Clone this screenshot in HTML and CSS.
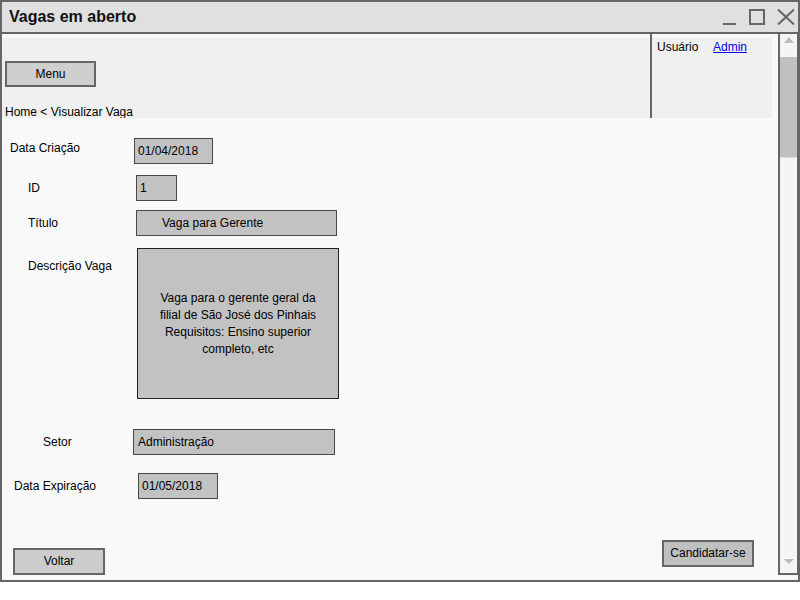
FILE: index.html
```html
<!DOCTYPE html>
<html lang="pt-BR">
<head>
<meta charset="utf-8">
<title>Vagas em aberto</title>
<link rel="stylesheet" href="styles.css">
</head>
<body>
<div class="window">
  <div class="titlebar">
    <span class="title">Vagas em aberto</span>
    <svg class="controls" width="76" height="30" viewBox="0 0 76 30">
      <rect x="1" y="21" width="13" height="2" fill="#666"/>
      <rect x="28" y="8" width="14" height="14" fill="none" stroke="#666" stroke-width="2"/>
      <path d="M56 7.5 L72 22.5 M72 7.5 L56 22.5" stroke="#666" stroke-width="2" fill="none"/>
    </svg>
  </div>
  <div class="body">
    <div class="main">
      <div class="header">
        <div class="nav">
          <div class="nav-inner">
            <div class="btn menu">Menu</div>
            <div class="crumb">Home &lt; Visualizar Vaga</div>
          </div>
        </div>
        <div class="user">
          <div class="user-inner">
            <span class="user-label">Usuário</span><a class="user-link" href="#">Admin</a>
          </div>
        </div>
      </div>
      <div class="form">
        <div class="row r1">
          <span class="label l1">Data Criação</span>
          <div class="field f1">01/04/2018</div>
        </div>
        <div class="row r2">
          <span class="label l2">ID</span>
          <div class="field f2">1</div>
        </div>
        <div class="row r3">
          <span class="label l3">Título</span>
          <div class="field f3">Vaga para Gerente</div>
        </div>
        <div class="row r4">
          <span class="label l4">Descrição Vaga</span>
          <div class="field area">Vaga para o gerente geral da filial de São José dos Pinhais Requisitos: Ensino superior completo, etc</div>
        </div>
        <div class="row r5">
          <span class="label l5">Setor</span>
          <div class="field f5">Administração</div>
        </div>
        <div class="row r6">
          <span class="label l6">Data Expiração</span>
          <div class="field f6">01/05/2018</div>
        </div>
        <div class="actions">
          <div class="btn back">Voltar</div>
          <div class="btn apply">Candidatar-se</div>
        </div>
      </div>
    </div>
    <div class="scrollbar">
      <div class="sb-up"><span class="tri-up"></span></div>
      <div class="sb-thumb"></div>
      <div class="sb-track"></div>
      <div class="sb-down"><span class="tri-down"></span></div>
    </div>
  </div>
</div>
</body>
</html>
```

FILE: styles.css
```css
html, body {
  margin: 0;
  padding: 0;
  background: #ffffff;
}

body {
  font-family: "Liberation Sans", Arial, sans-serif;
  font-size: 12px;
  color: #000;
}

.window {
  width: 800px;
  height: 582px;
  box-sizing: border-box;
  border: 2px solid #666;
  background: #f9f9f9;
  display: flex;
  flex-direction: column;
}

.titlebar {
  height: 30px;
  flex: 0 0 30px;
  border-bottom: 2px solid #666;
  background: #e0e0e0;
  display: flex;
  align-items: center;
  justify-content: space-between;
}

.title {
  padding-left: 7px;
  font-size: 16px;
  font-weight: bold;
  line-height: 30px;
  color: #111;
}

.controls {
  display: block;
}

.body {
  flex: 1;
  display: flex;
  min-height: 0;
}

.main {
  width: 776px;
  display: flex;
  flex-direction: column;
}

.header {
  display: flex;
  height: 84px;
  width: 770px;
}

.nav {
  width: 650px;
  box-sizing: border-box;
  border-right: 2px solid #666;
  padding-top: 4px;
}

.nav-inner {
  height: 80px;
  box-sizing: border-box;
  background: #f0f0f0;
  overflow: hidden;
  padding: 23px 0 0 3px;
}

.btn {
  box-sizing: border-box;
  border: 2px solid #666;
  background: #c8c8c8;
  text-align: center;
  font-size: 12px;
}

.menu {
  width: 91px;
  height: 26px;
  line-height: 22px;
  background: #cfcfcf;
}

.crumb {
  margin-top: 18px;
  line-height: 14px;
  white-space: nowrap;
}

.user {
  width: 120px;
  padding-top: 4px;
}

.user-inner {
  height: 80px;
  box-sizing: border-box;
  background: #f0f0f0;
  padding: 2px 0 0 5px;
  line-height: 14px;
}

.user-label {
  display: inline-block;
  width: 56px;
}

.user-link {
  color: #0000ee;
  text-decoration: underline;
}

.form {
  display: flex;
  flex-direction: column;
}

.row {
  display: flex;
  align-items: center;
}

.label {
  line-height: 14px;
  white-space: nowrap;
}

.field {
  box-sizing: border-box;
  height: 26px;
  border: 1px solid #484848;
  background: #c2c2c2;
  line-height: 24px;
  padding-left: 3px;
  white-space: nowrap;
}

.r1 { margin-top: 20px; padding-left: 8px; }
.l1 { width: 124px; margin-bottom: 6px; }
.f1 { width: 79px; }

.r2 { margin-top: 11px; padding-left: 26px; }
.l2 { width: 108px; }
.f2 { width: 41px; padding-left: 3px; }

.r3 { margin-top: 9px; padding-left: 26px; }
.l3 { width: 108px; }
.f3 { width: 201px; padding-left: 25px; }

.r4 { margin-top: 12px; padding-left: 26px; align-items: flex-start; }
.l4 { width: 109px; margin-top: 11px; }
.area {
  width: 202px;
  height: 151px;
  border-color: #222;
  white-space: normal;
  display: flex;
  align-items: center;
  justify-content: center;
  text-align: center;
  line-height: 17px;
  padding: 0 14px;
}

.r5 { margin-top: 30px; padding-left: 41px; }
.l5 { width: 90px; }
.f5 { width: 202px; padding-left: 4px; }

.r6 { margin-top: 18px; padding-left: 12px; }
.l6 { width: 124px; }
.f6 { width: 80px; padding-left: 3px; }

.actions {
  display: flex;
  justify-content: space-between;
  align-items: flex-start;
  margin-top: 41px;
  padding: 0 24px 0 11px;
}

.back {
  width: 92px;
  height: 27px;
  line-height: 23px;
  margin-top: 8px;
  background: #cccccc;
}

.apply {
  width: 92px;
  height: 27px;
  line-height: 23px;
  background: #c0c0c0;
}

.scrollbar {
  width: 20px;
  height: 541px;
  box-sizing: border-box;
  border-left: 2px solid #666;
  border-right: 1px solid #666;
  border-bottom: 2px solid #666;
  background: #f5f5f5;
  display: flex;
  flex-direction: column;
}

.sb-up {
  height: 23px;
  display: flex;
  justify-content: center;
  padding-top: 3px;
  box-sizing: border-box;
}

.tri-up {
  width: 0;
  height: 0;
  border-left: 5px solid transparent;
  border-right: 5px solid transparent;
  border-bottom: 6px solid #bbb;
}

.sb-thumb {
  height: 100px;
  background: #c0c0c0;
  border-bottom: 1px solid #dcdcdc;
}

.sb-track {
  flex: 1;
}

.sb-down {
  height: 14px;
  display: flex;
  justify-content: center;
}

.tri-down {
  width: 0;
  height: 0;
  border-left: 5px solid transparent;
  border-right: 5px solid transparent;
  border-top: 5px solid #bbb;
}
```
